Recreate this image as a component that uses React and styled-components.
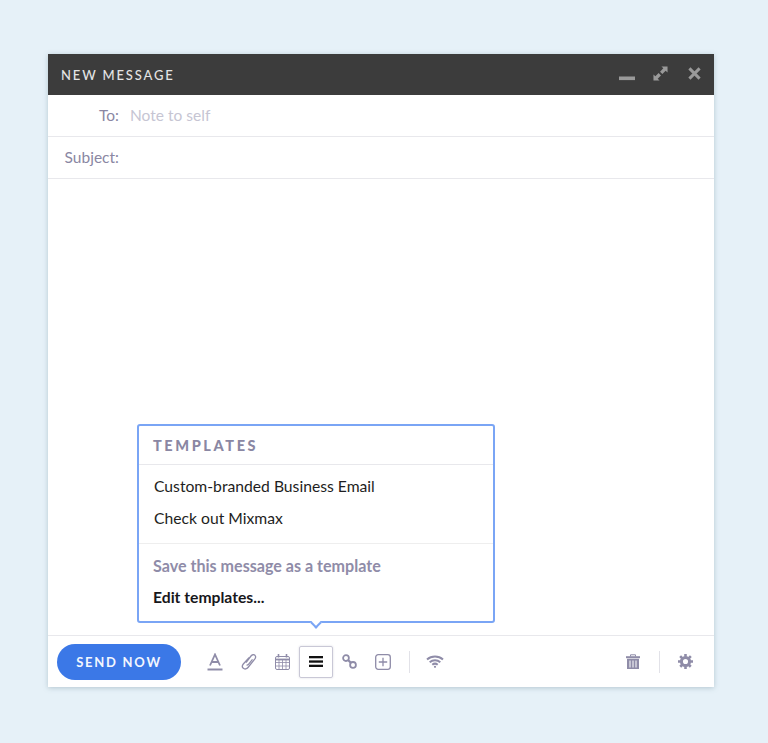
import React from "react";
import styled, { createGlobalStyle } from "styled-components";

const Global = createGlobalStyle`
  html, body { margin: 0; padding: 0; background: #e6f1f8; }
  body { font-family: "Lato", "Open Sans", sans-serif; }
`;
const Page = styled.div`
  width: 768px; height: 743px; box-sizing: border-box; padding: 54px 54px 0 48px; overflow: hidden;
`;
const Win = styled.div`
  position: relative; width: 666px; height: 633px; background: #fff; display: flex; flex-direction: column;
  box-shadow: 0 1px 5px rgba(90, 120, 135, .35);
`;
const Header = styled.div`
  height: 41px; flex: none; box-sizing: border-box; background: #3c3c3c; display: flex; align-items: center; justify-content: space-between;
  padding: 0 13px 0 13px; color: #e4e4e4; font-size: 13px; letter-spacing: 1.85px; font-weight: 500;
`;
const WinIcons = styled.div`display: flex; align-items: center; margin-top: -2px;`;
const WinIcon = styled.span`display: flex; margin-left: ${p => p.$ml || 0}px;`;
const Row = styled.div`
  height: 42px; flex: none; box-sizing: border-box; border-bottom: 1px solid #e8e8ec; display: flex; align-items: center;
  font-size: 15.5px; letter-spacing: .02px; padding-bottom: 2px;
`;
const Label = styled.div`width: 71px; text-align: right; color: #8a87a3;`;
const Value = styled.div`margin-left: 11px; color: #c6c5d3;`;
const Body = styled.div`flex: 1;`;
const Footer = styled.div`
  height: 52px; flex: none; box-sizing: border-box; border-top: 1px solid #e8e8ec; display: flex; align-items: center;
  padding: 0 12px 0 9px;
`;
const Send = styled.button`
  width: 124px; height: 36px; border: 0; border-radius: 18px; background: #3b78e7; color: #f2f6fe; padding: 0;
  font: 700 13px "Lato", sans-serif; letter-spacing: 1.75px; margin-right: 17.25px;
`;
const Tool = styled.div`
  width: 33.5px; height: 32px; flex: none; box-sizing: border-box; display: flex; align-items: center; justify-content: center;
  color: #8f8ca8; border-radius: 2px;
  ${p => p.$active && `width: 34px; margin: 0 -.25px; border: 1px solid #c9c8d6; color: #111; box-shadow: 0 0 2px rgba(120,120,150,.3);`}
`;
const Sep = styled.div`width: 1px; height: 22px; flex: none; background: #e2e2e8; margin: ${p => p.$m};`;
const Spacer = styled.div`flex: 1;`;
const Popup = styled.div`
  position: absolute; left: 89px; top: 370px; width: 358px; height: 199px; box-sizing: border-box; background: #fff;
  border: 2px solid #7aa5f5; border-radius: 3px;
  &::after {
    content: ""; position: absolute; left: 173px; bottom: -6px; width: 8px; height: 8px; background: #fff;
    border-right: 2px solid #7aa5f5; border-bottom: 2px solid #7aa5f5; transform: rotate(45deg); box-sizing: border-box;
  }
`;
const PopTitle = styled.div`
  height: 39px; box-sizing: border-box; border-bottom: 1px solid #e8e8ec; padding: 11px 0 0 14px; font-size: 14.5px; font-weight: 900;
  letter-spacing: 2.6px; color: #8a87a3; line-height: 17px;
`;
const Items = styled.div`
  height: 79px; box-sizing: border-box; border-bottom: 1px solid #eee; padding-top: 5px;
  display: flex; flex-direction: column;
`;
const Item = styled.div`height: 32px; line-height: 32px; padding-left: 15px; font-size: 15.7px; color: #1e1e22;`;
const Action = styled.div`
  height: 30px; line-height: 30px; padding-left: 14px; font-weight: 700;
  font-size: ${p => p.$muted ? 16.1 : 15.7}px;
  color: ${p => p.$muted ? "#8f8ca8" : "#17171b"};
`;
const Actions = styled.div`padding-top: 7px; display: flex; flex-direction: column; gap: 1px;`;

const I = ({ w = 18, h = 18, children, sw = 1.4 }) => (
  <svg width={w} height={h} viewBox={`0 0 ${w} ${h}`} fill="none" stroke="currentColor" strokeWidth={sw}>{children}</svg>
);

export default function App() {
  return (
    <Page>
      <Global />
      <Win>
        <Header>
          <span>NEW MESSAGE</span>
          <WinIcons>
            <WinIcon>
              <svg width="16" height="14" viewBox="0 0 16 14"><rect x="0" y="9.500" width="16" height="3.600" fill="#9a9a9a" /></svg>
            </WinIcon>
            <WinIcon $ml={18}>
              <svg width="15" height="15" viewBox="0 0 16 16" fill="#9a9a9a">
                <path d="M9 .5h6.500V7l-2-2L10 8.500 7.500 6 11 2.500z" />
                <path d="M.5 15.500V9l2 2L6 7.500 8.500 10 5 13.500l2 2z" />
              </svg>
            </WinIcon>
            <WinIcon $ml={20}>
              <svg width="13" height="13" viewBox="0 0 14 14" stroke="#9a9a9a" strokeWidth="3.200"><path d="M1.500 1.500l11 11M12.500 1.500l-11 11" /></svg>
            </WinIcon>
          </WinIcons>
        </Header>
        <Row><Label>To:</Label><Value>Note to self</Value></Row>
        <Row><Label>Subject:</Label></Row>
        <Body />
        <Footer>
          <Send>SEND NOW</Send>
          <Tool>
            <svg width="16" height="18" viewBox="0 0 16 18" fill="none" stroke="currentColor">
              <path d="M3 12.500L8 1.500l5 11M4.600 9h6.800" strokeWidth="1.800" />
              <path d="M.5 16.500h15" strokeWidth="2" />
            </svg>
          </Tool>
          <Tool>
            <I w={16} h={17} sw={1.300}>
              <path d="M5 9.500l5-6.500c1-1.300 3-1.800 4-.6 1 1.100.6 2.600-.3 3.800l-6.700 8.300c-1.200 1.500-3.300 2-4.700.8-1.200-1-1.100-2.900 0-4.300L8 4.800" />
              <path d="M5.600 11.800c.6.500 1.400.1 1.900-.5l4-5" />
            </I>
          </Tool>
          <Tool>
            <svg width="15" height="16" viewBox="0 0 15 16" fill="none" stroke="currentColor" strokeWidth="1">
              <rect x=".5" y="2.500" width="14" height="13" rx="1.500" />
              <path d="M.5 5.500h14" strokeWidth="1.800" />
              <path d="M.5 8.500h14M.5 12h14M4 5.500v10M7.500 5.500v10M11 5.500v10" strokeWidth=".8" />
              <path d="M3.500 0v3.500M11.500 0v3.500" strokeWidth="1.600" />
            </svg>
          </Tool>
          <Tool $active>
            <svg width="14" height="11" viewBox="0 0 14 11" fill="currentColor"><rect width="14" height="2.300" /><rect y="4.400" width="14" height="2.300" /><rect y="8.700" width="14" height="2.300" /></svg>
          </Tool>
          <Tool>
            <I w={15} h={15} sw={1.800}>
              <circle cx="4" cy="4.100" r="2.900" />
              <circle cx="11" cy="10.900" r="2.900" />
              <path d="M6 6l3 2.900" strokeWidth="2.200" />
            </I>
          </Tool>
          <Tool>
            <I w={16} h={16} sw={1.300}>
              <rect x=".7" y=".7" width="14.600" height="14.600" rx="2.500" />
              <path d="M8 3.800v8.400M3.800 8h8.400" />
            </I>
          </Tool>
          <Sep $m="0 8px 0 10px" />
          <Tool>
            <svg width="18" height="13" viewBox="0 0 18 13" fill="none" stroke="currentColor" strokeWidth="2">
              <path d="M1 4.500c4.500-4 11.500-4 16 0M3.700 7.200c3-2.600 7.600-2.600 10.600 0M6.300 9.700c1.500-1.200 3.900-1.200 5.400 0" />
              <circle cx="9" cy="11.800" r="1.100" fill="currentColor" stroke="none" />
            </svg>
          </Tool>
          <Spacer />
          <Tool>
            <svg width="14" height="15" viewBox="0 0 14 15" fill="currentColor">
              <path d="M0 2.200h14v2H0z" />
              <path d="M4.500 2.500V.8h5v1.700" fill="none" stroke="currentColor" />
              <path fillRule="evenodd" d="M1 4.800h12V15H1zM3.500 6.500v7h1v-7zM6.500 6.500v7h1v-7zM9.500 6.500v7h1v-7z" />
            </svg>
          </Tool>
          <Sep $m="0 9px" />
          <Tool>
            <svg width="15" height="15" viewBox="0 0 14 14">
              <circle cx="7" cy="7" r="3.800" fill="none" stroke="currentColor" strokeWidth="2.800" />
              <path d="M7 0v14M0 7h14M2 2l10 10M12 2L2 12" stroke="currentColor" strokeWidth="2.400" strokeDasharray="2.600 8.800" />
            </svg>
          </Tool>
        </Footer>
        <Popup>
          <PopTitle>TEMPLATES</PopTitle>
          <Items>
            <Item>Custom-branded Business Email</Item>
            <Item>Check out Mixmax</Item>
          </Items>
          <Actions>
            <Action $muted>Save this message as a template</Action>
            <Action>Edit templates...</Action>
          </Actions>
        </Popup>
      </Win>
    </Page>
  );
}
